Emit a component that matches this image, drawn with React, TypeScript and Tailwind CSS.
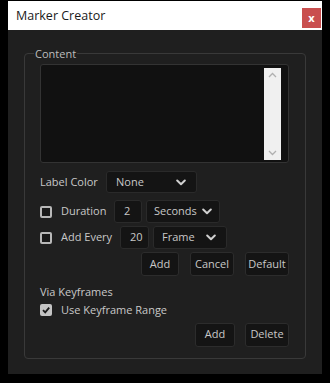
import React from "react";

const font = { fontFamily: '"Open Sans", "Noto Sans", sans-serif' };

function Chevron() {
  return (
    <svg width="10" height="7" viewBox="0 0 10 7" className="shrink-0">
      <path d="M1.2 1.5 L5 5.2 L8.8 1.5" fill="none" stroke="#d0d0d0" strokeWidth="2" strokeLinecap="round" strokeLinejoin="round" />
    </svg>
  );
}

function Select({ label, w, h = "h-[23px]", pr = "pr-[9px]", pl = "pl-[8px]" }: { label: string; w: string; h?: string; pr?: string; pl?: string }) {
  return (
    <div className={`${w} ${h} ${pr} ${pl} flex items-center justify-between rounded-[3px] border border-[#2a2a2a] bg-[#141414] text-[#c8c8c8]`}>
      <span>{label}</span>
      <Chevron />
    </div>
  );
}

function Box({ children, w }: { children: React.ReactNode; w: string }) {
  return (
    <div className={`${w} h-[23px] flex items-center rounded-[3px] border border-[#2a2a2a] bg-[#141414] pl-[9px] text-[#c8c8c8]`}>
      {children}
    </div>
  );
}

function Btn({ children, w }: { children: React.ReactNode; w: string }) {
  return (
    <div className={`${w} h-[24px] flex items-center justify-center rounded-[3px] border border-[#2c2c2c] bg-[#141414] text-[#c8c8c8]`}>
      {children}
    </div>
  );
}

function Check({ checked }: { checked?: boolean }) {
  if (checked) {
    return (
      <div className="w-[12px] h-[12px] rounded-[2px] bg-[#c4c4c4] flex items-center justify-center shrink-0">
        <svg width="10" height="10" viewBox="0 0 10 10">
          <path d="M2 5.2 L4.2 7.4 L8.2 2.6" fill="none" stroke="#1a1a1a" strokeWidth="1.8" />
        </svg>
      </div>
    );
  }
  return <div className="w-[12px] h-[12px] rounded-[2px] border-2 border-[#b8b8b8] bg-[#1a1a1a] shrink-0" />;
}

export default function App() {
  return (
    <div className="w-[330px] h-[383px] bg-black pt-[1px] pl-[8px]" style={font}>
      <div className="w-[314px] h-[373px] flex flex-col">
        <div className="h-[30px] bg-white flex items-start justify-between">
          <span className="mt-[6px] ml-[8px] text-[12.5px] text-[#1a1a1a]">Marker Creator</span>
          <div className="mt-[7px] mr-[1px] w-[19px] h-[20px] bg-[#c94f4f] flex items-center justify-center text-white text-[11px] font-bold leading-none pb-[2px]">
            x
          </div>
        </div>
        <div className="flex-1 bg-[#1f1f1f] pt-[23px] px-[16px] pb-[15px]">
          <div className="relative h-[306px] rounded-[4px] border border-[#393939] pt-[10px] pl-[15px] pr-[16px] text-[11px]">
            <span className="absolute -top-[8px] left-[9px] bg-[#1f1f1f] px-[1px] text-[11px] leading-[15px] text-[#bdbdbd]">Content</span>
            <div className="h-[99px] rounded-[3px] border border-[#333] bg-[#111111] flex justify-end pt-[3px] pb-[2px] pr-[7px]">
              <div className="w-[17px] bg-[#f0f0f0] flex flex-col items-center justify-between py-[4px]">
                <svg width="9" height="6" viewBox="0 0 9 6"><path d="M1 5 L4.5 1.5 L8 5" fill="none" stroke="#b0b0b0" strokeWidth="1.3" /></svg>
                <svg width="9" height="6" viewBox="0 0 9 6"><path d="M1 1 L4.5 4.5 L8 1" fill="none" stroke="#b0b0b0" strokeWidth="1.3" /></svg>
              </div>
            </div>
            <div className="mt-[8px] flex items-center h-[22px]">
              <span className="w-[66px] text-[#c8c8c8]">Label Color</span>
              <Select label="None" w="w-[91px]" h="h-[22px]" pr="pr-[10px]" pl="pl-[9px]" />
            </div>
            <div className="mt-[7px] flex items-center">
              <Check />
              <span className="ml-[9px] w-[53px] text-[#c8c8c8]">Duration</span>
              <Box w="w-[28px]">2</Box>
              <div className="ml-[4px]"><Select label="Seconds" w="w-[74px]" pr="pr-[7px]" pl="pl-[7px]" /></div>
            </div>
            <div className="mt-[3px] flex items-center">
              <Check />
              <span className="ml-[9px] w-[59px] text-[#c8c8c8]">Add Every</span>
              <Box w="w-[29px]">20</Box>
              <div className="ml-[4px]"><Select label="Frame" w="w-[74px]" pr="pr-[10px]" /></div>
            </div>
            <div className="mt-[3px] flex justify-end gap-[11px]">
              <Btn w="w-[38px]">Add</Btn>
              <Btn w="w-[44px]">Cancel</Btn>
              <Btn w="w-[44px]">Default</Btn>
            </div>
            <div className="mt-[7px] text-[#c8c8c8] leading-[17px]">Via Keyframes</div>
            <div className="mt-[2px] flex items-center">
              <Check checked />
              <span className="ml-[9px] text-[#c8c8c8]">Use Keyframe Range</span>
            </div>
            <div className="mt-[4px] flex justify-end gap-[10px]">
              <Btn w="w-[40px]">Add</Btn>
              <Btn w="w-[44px]">Delete</Btn>
            </div>
          </div>
        </div>
      </div>
    </div>
  );
}
